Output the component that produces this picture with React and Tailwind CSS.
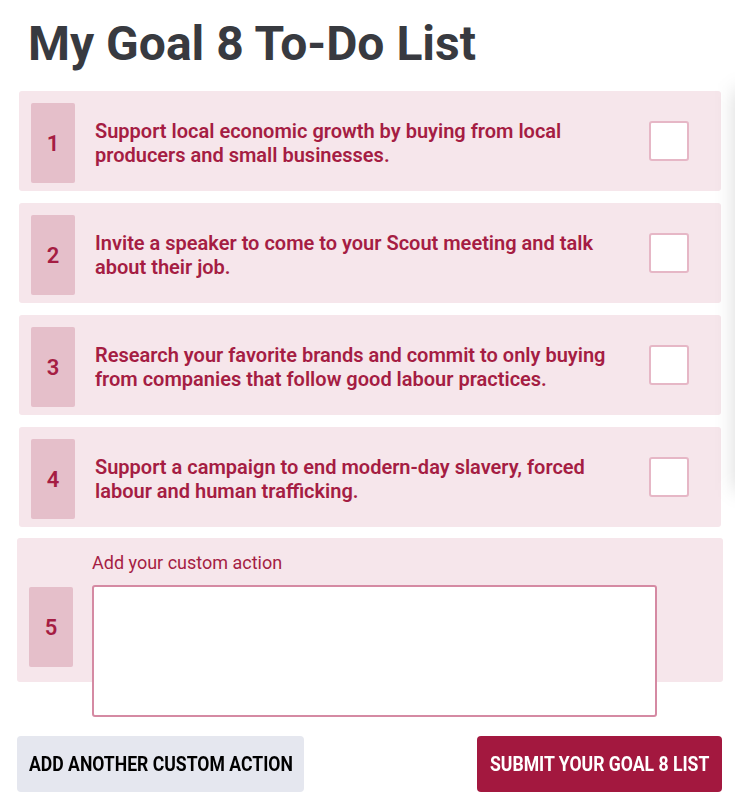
const actions = [
  'Support local economic growth by buying from local producers and small businesses.',
  'Invite a speaker to come to your Scout meeting and talk about their job.',
  'Research your favorite brands and commit to only buying from companies that follow good labour practices.',
  'Support a campaign to end modern-day slavery, forced labour and human trafficking.',
]

function ActionRow({ number, text }) {
  return (
    <div className="ml-[19px] mr-[14px] flex items-center rounded-[3px] bg-[#f6e6eb] pb-2 pl-3 pr-8 pt-3">
      <div className="flex h-20 w-11 shrink-0 items-center justify-center rounded-[2px] bg-[#e5bfca] text-[22px] font-semibold text-[#a51d43]">
        {number}
      </div>
      <p className="ml-5 flex-1 pr-6 text-[20px] font-semibold leading-6 text-[#a51d43]">{text}</p>
      <input
        type="checkbox"
        className="-mt-1 h-10 w-10 shrink-0 appearance-none rounded-[3px] border-2 border-[#e6b7c6] bg-white"
      />
    </div>
  )
}

export default function App() {
  return (
    <div className="relative min-h-[800px] overflow-hidden bg-white font-['Roboto',sans-serif]">
      <div className="pointer-events-none absolute right-[-22px] top-[90px] h-[400px] w-[22px] bg-black/15 blur-[10px]" />
      <h1 className="px-[28px] pt-[14px] text-[48px] font-bold leading-[60px] text-[#383a40]">My Goal 8 To-Do List</h1>

      <div className="mt-[17px] flex flex-col gap-3">
        {actions.map((text, index) => (
          <ActionRow key={index} number={index + 1} text={text} />
        ))}
      </div>

      <div className="ml-[17px] mr-[12px] mt-[11px] flex h-[144px] items-start rounded-[3px] bg-[#f6e6eb] pl-3 pr-[66px] pt-[13px]">
        <div className="mt-[36px] flex h-20 w-11 shrink-0 items-center justify-center rounded-[2px] bg-[#e5bfca] text-[22px] font-semibold text-[#a51d43]">
          5
        </div>
        <div className="ml-[19px] flex-1">
          <label className="block text-[18px] leading-6 text-[#a51d43]">Add your custom action</label>
          <textarea className="mt-[10px] block h-[132px] w-full resize-none rounded-[3px] border-2 border-[#d58aa3] bg-white" />
        </div>
      </div>

      <div className="ml-[17px] mr-[13px] mt-[54px] flex items-center justify-between">
        <button
          type="button"
          className="flex h-[56px] w-[287px] items-center justify-center rounded-[4px] bg-[#e5e7ef] text-[20px] font-bold uppercase text-black"
        >
          <span className="inline-block scale-x-[0.88] whitespace-nowrap">Add another custom action</span>
        </button>
        <button
          type="button"
          className="flex h-[56px] w-[245px] items-center justify-center rounded-[4px] bg-[#a3183f] text-[20px] font-bold uppercase text-white"
        >
          <span className="inline-block scale-x-[0.88] whitespace-nowrap">Submit your Goal 8 list</span>
        </button>
      </div>
    </div>
  )
}
